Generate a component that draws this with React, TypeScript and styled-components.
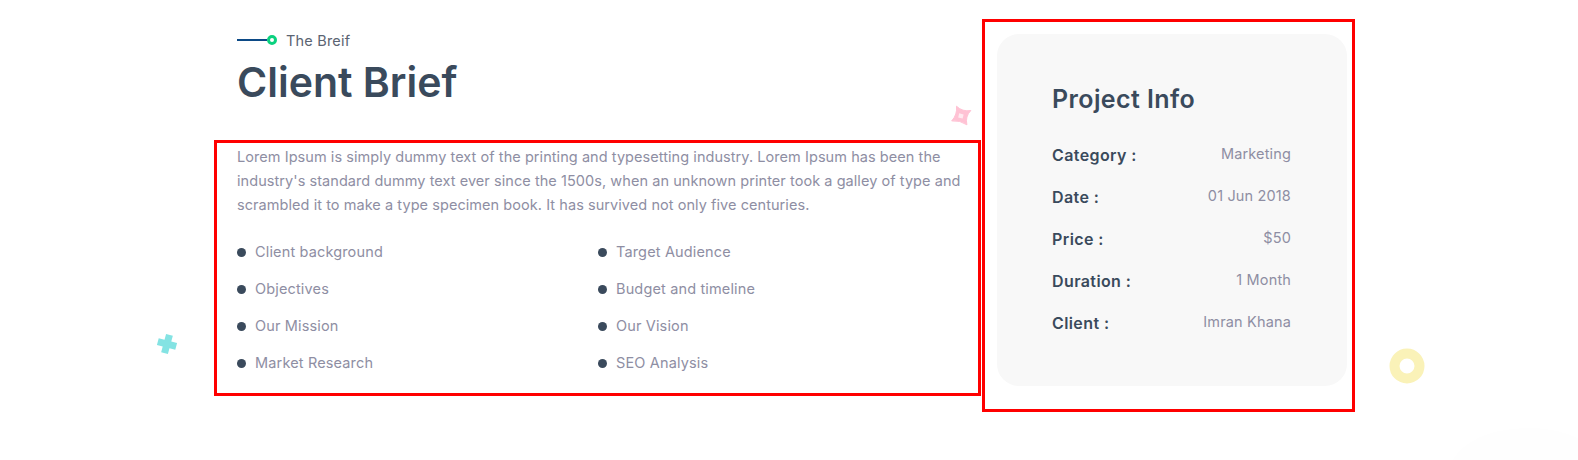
import React from "react";
import styled, { createGlobalStyle } from "styled-components";

const GlobalStyle = createGlobalStyle`
  html, body {
    margin: 0;
    padding: 0;
    background: #ffffff;
    font-family: Inter, "Open Sans", sans-serif;
  }
`;

const Page = styled.div`
  position: relative;
  width: 1578px;
  height: 460px;
  overflow: hidden;
  display: flex;
  align-items: flex-start;
  padding: 19px 0 0 214px;
  box-sizing: border-box;
`;

const LeftColumn = styled.div`
  width: 767px;
  margin-right: 1px;
`;

const Heading = styled.div`
  padding-left: 23px;
  height: 121px;
`;

const Eyebrow = styled.div`
  display: flex;
  align-items: center;
  height: 42px;
  gap: 9px;
  font-size: 14.5px;
  letter-spacing: 0.2px;
  color: #5b6472;
`;

const Line = styled.span`
  width: 30px;
  height: 2px;
  background: #0c4a86;
`;

const Dot = styled.span`
  width: 10px;
  height: 10px;
  margin-left: -9px;
  border: 3px solid #0bd17f;
  border-radius: 50%;
  background: #fff;
  box-sizing: border-box;
`;

const Title = styled.h1`
  margin: -2px 0 0;
  font-size: 41px;
  line-height: 46px;
  font-weight: 600;
  color: #3a4a5c;
`;

const BriefBox = styled.section`
  border: 3px solid #ff0000;
  box-sizing: border-box;
  height: 256px;
  padding: 2px 0 0 20px;
`;

const Paragraph = styled.p`
  margin: 0;
  font-size: 14.5px;
  line-height: 24px;
  letter-spacing: 0.06px;
  color: #8e8ea3;
  white-space: nowrap;
`;

const ParaLine = styled.span`
  display: block;
`;

const Checklist = styled.ul`
  list-style: none;
  margin: 16px 0 0;
  padding: 0;
  display: grid;
  grid-template-columns: 361px 361px;
  grid-auto-rows: 37px;
`;

const CheckItem = styled.li`
  display: flex;
  align-items: center;
  gap: 9px;
  font-size: 14.5px;
  letter-spacing: 0.15px;
  color: #8e8ea3;
`;

const Bullet = styled.span`
  width: 9px;
  height: 9px;
  margin-top: 2px;
  border-radius: 50%;
  background: #3a4a5c;
`;

const InfoBox = styled.aside`
  border: 3px solid #ff0000;
  box-sizing: border-box;
  width: 373px;
  height: 393px;
  padding: 12px 5px 0 12px;
`;

const InfoCard = styled.div`
  background: #f8f8f8;
  border-radius: 22px;
  height: 352px;
  padding: 48px 56px 0 55px;
  box-sizing: border-box;
`;

const InfoTitle = styled.h2`
  margin: 0 0 18px;
  font-size: 25px;
  line-height: 34px;
  font-weight: 600;
  letter-spacing: 0.4px;
  color: #3a4a5c;
`;

const InfoRow = styled.div`
  display: flex;
  justify-content: space-between;
  align-items: center;
  height: 42px;
`;

const InfoLabel = styled.span`
  font-size: 16px;
  font-weight: 600;
  letter-spacing: 0.4px;
  color: #3a4a5c;
`;

const InfoValue = styled.span`
  font-size: 14.5px;
  letter-spacing: 0.15px;
  color: #8e8ea3;
  position: relative;
  top: -2px;
`;

const Shape = styled.svg<{ $x: number; $y: number }>`
  position: absolute;
  left: ${(p) => p.$x}px;
  top: ${(p) => p.$y}px;
`;

const items = [
  "Client background",
  "Target Audience",
  "Objectives",
  "Budget and timeline",
  "Our Mission",
  "Our Vision",
  "Market Research",
  "SEO Analysis",
];

const info = [
  ["Category :", "Marketing"],
  ["Date :", "01 Jun 2018"],
  ["Price :", "$50"],
  ["Duration :", "1 Month"],
  ["Client :", "Imran Khana"],
];

export default function App() {
  return (
    <>
      <GlobalStyle />
      <Page>
        <LeftColumn>
          <Heading>
            <Eyebrow>
              <Line />
              <Dot />
              <span>The Breif</span>
            </Eyebrow>
            <Title>Client Brief</Title>
          </Heading>
          <BriefBox>
            <Paragraph>
              <ParaLine>Lorem Ipsum is simply dummy text of the printing and typesetting industry. Lorem Ipsum has been the</ParaLine>
              <ParaLine>industry's standard dummy text ever since the 1500s, when an unknown printer took a galley of type and</ParaLine>
              <ParaLine>scrambled it to make a type specimen book. It has survived not only five centuries.</ParaLine>
            </Paragraph>
            <Checklist>
              {items.map((item) => (
                <CheckItem key={item}>
                  <Bullet />
                  {item}
                </CheckItem>
              ))}
            </Checklist>
          </BriefBox>
        </LeftColumn>
        <InfoBox>
          <InfoCard>
            <InfoTitle>Project Info</InfoTitle>
            {info.map(([label, value]) => (
              <InfoRow key={label}>
                <InfoLabel>{label}</InfoLabel>
                <InfoValue>{value}</InfoValue>
              </InfoRow>
            ))}
          </InfoCard>
        </InfoBox>

        <Shape $x={950} $y={105} width="22" height="22" viewBox="0 0 22 22">
          <path
            fill="#ffc2d4"
            stroke="#ffc2d4"
            strokeWidth="1"
            strokeLinejoin="round"
            d="M6.5 1.2 Q12.5 7 20.8 5.5 Q15 11.5 16.9 19.8 Q10 15 1.7 15.9 Q7.5 9.5 6.5 1.2 Z"
          />
          <path fill="#ffeaf0" d="M9.2 8.2 L8.2 12.4 L12.6 13.6 L13.6 9.4 Z" />
        </Shape>
        <Shape $x={156} $y={333} width="22" height="22" viewBox="0 0 22 22">
          <path
            fill="#84e3e3"
            transform="rotate(15 11 11)"
            d="M7.5 1.5 H14.5 V7.5 H20.5 V14.5 H14.5 V20.5 H7.5 V14.5 H1.5 V7.5 H7.5 Z"
          />
        </Shape>
        <Shape $x={1389} $y={348} width="36" height="36" viewBox="0 0 36 36">
          <circle cx="18" cy="18" r="12.5" fill="none" stroke="#faf2b8" strokeWidth="10" />
        </Shape>
        <Shape $x={1450} $y={428} width="128" height="32" viewBox="0 0 128 32">
          <ellipse cx="78" cy="44" rx="78" ry="44" fill="#fefefe" />
        </Shape>
      </Page>
    </>
  );
}
